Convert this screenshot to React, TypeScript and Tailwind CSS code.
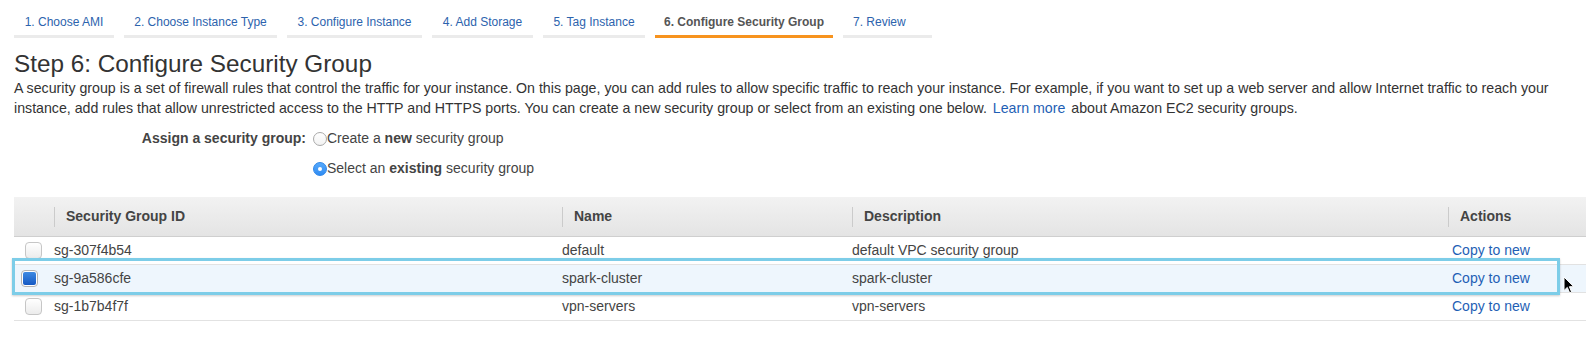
import React from "react";

const tabs = [
  { label: "1. Choose AMI", w: "w-[100px]" },
  { label: "2. Choose Instance Type", w: "w-[153px]" },
  { label: "3. Configure Instance", w: "w-[135px]" },
  { label: "4. Add Storage", w: "w-[101px]" },
  { label: "5. Tag Instance", w: "w-[102px]" },
  { label: "6. Configure Security Group", w: "w-[178px]", active: true },
  { label: "7. Review", w: "w-[89px]", left: true },
];

const rows = [
  { id: "sg-307f4b54", name: "default", desc: "default VPC security group" },
  { id: "sg-9a586cfe", name: "spark-cluster", desc: "spark-cluster", selected: true },
  { id: "sg-1b7b4f7f", name: "vpn-servers", desc: "vpn-servers" },
];

function Radio({ checked }: { checked?: boolean }) {
  if (checked) {
    return (
      <span className="relative top-[1px] flex h-[14px] w-[14px] shrink-0 items-center justify-center rounded-full border border-[#2f86e8] bg-gradient-to-b from-[#56a9fb] to-[#2f8cf3]">
        <span className="h-[4px] w-[4px] rounded-full bg-white" />
      </span>
    );
  }
  return (
    <span className="relative top-[1px] block h-[14px] w-[14px] shrink-0 rounded-full border border-[#a9a9a9] bg-gradient-to-b from-white to-[#f2f2f2]" />
  );
}

function Checkbox({ checked }: { checked?: boolean }) {
  if (checked) {
    return (
      <span className="ml-[7px] flex h-[17px] w-[17px] items-center justify-center rounded-[4px] border border-[#b4b4b4] bg-white">
        <span className="h-[13px] w-[13px] rounded-[2px] bg-gradient-to-b from-[#3f8ae2] to-[#1459c4]" />
      </span>
    );
  }
  return (
    <span className="ml-[11px] block h-[17px] w-[17px] rounded-[4px] border border-[#c6c6c6] bg-gradient-to-b from-white to-[#ececec]" />
  );
}

function HeadCell({ children }: { children?: React.ReactNode }) {
  return (
    <div className="flex h-[39px] items-center">
      <div className="h-[20px] border-l border-[#cbcbcb]" />
      <span className="pl-[11px] font-bold text-[#444]">{children}</span>
    </div>
  );
}

const COLS = "grid-cols-[40px_508px_290px_596px_1fr]";

export default function App() {
  return (
    <div className="relative h-[337px] w-[1586px] overflow-hidden bg-white font-['Liberation_Sans',Arial,sans-serif] text-[#333]">
      {/* Wizard tabs */}
      <div className="flex gap-[10px] pl-[14px]">
        {tabs.map((t) => (
          <div
            key={t.label}
            className={
              t.active
                ? `${t.w} whitespace-nowrap border-b-[3px] border-[#f7931e] pb-[5px] pt-[14px] text-center text-[12px] font-bold leading-[16px] text-[#555]`
                : t.left
                ? `${t.w} whitespace-nowrap border-b-[3px] border-[#ebebeb] pb-[5px] pl-[10px] pt-[14px] text-[12px] leading-[16px] text-[#2c63ad]`
                : `${t.w} whitespace-nowrap border-b-[3px] border-[#ebebeb] pb-[5px] pt-[14px] text-center text-[12px] leading-[16px] text-[#2c63ad]`
            }
          >
            {t.label}
          </div>
        ))}
      </div>

      <div className="pl-[14px]">
        <h1 className="mt-[12px] text-[24.3px] leading-[28px] text-[#333]">
          Step 6: Configure Security Group
        </h1>
        <p className="whitespace-nowrap text-[14.2px] leading-[20px] text-[#333]">
          A security group is a set of firewall rules that control the traffic for your instance. On this page, you can add rules to allow specific traffic to reach your instance. For example, if you want to set up a web server and allow Internet traffic to reach your
          <br />
          instance, add rules that allow unrestricted access to the HTTP and HTTPS ports. You can create a new security group or select from an existing one below.{" "}
          <span className="px-[2px] text-[#1f5fb5]">Learn more</span> about Amazon EC2 security groups.
        </p>

        <div className="mt-[10px] grid grid-cols-[292px_1fr] gap-x-[7px] gap-y-[10px] text-[14px] leading-[20px]">
          <div className="text-right font-bold text-[#444]">Assign a security group:</div>
          <div className="flex items-center text-[#444]">
            <Radio />
            <span>
              Create a <b>new</b> security group
            </span>
          </div>
          <div />
          <div className="flex items-center text-[#444]">
            <Radio checked />
            <span>
              Select an <b>existing</b> security group
            </span>
          </div>
        </div>

        {/* Table */}
        <div className="relative mt-[19px] text-[14px] text-[#444]">
          <div className={`grid ${COLS} border-b border-[#cfcfcf] bg-gradient-to-b from-[#f2f2f2] to-[#e4e4e4]`}>
            <div className="h-[39px]" />
            <HeadCell>Security Group ID</HeadCell>
            <HeadCell>Name</HeadCell>
            <HeadCell>Description</HeadCell>
            <HeadCell>Actions</HeadCell>
          </div>
          {rows.map((r) => (
            <div
              key={r.id}
              className={`grid h-[28px] ${COLS} items-center border-b border-[#e2e2e2] ${
                r.selected ? "bg-[#eef6fd]" : "bg-white"
              }`}
            >
              <div className="flex items-center">
                <Checkbox checked={r.selected} />
              </div>
              <div className="whitespace-nowrap">{r.id}</div>
              <div className="whitespace-nowrap">{r.name}</div>
              <div className="whitespace-nowrap">{r.desc}</div>
              <div className="whitespace-nowrap pl-[4px] text-[#1f5fb5]">Copy to new</div>
            </div>
          ))}

          {/* highlight annotation */}
          <div className="pointer-events-none absolute left-[-2px] top-[61px] h-[37px] w-[1548px] border-[3px] border-[#7dcde8] shadow-[0_1px_2px_rgba(0,0,0,0.2)]" />

          {/* mouse cursor */}
          <svg
            className="absolute left-[1549px] top-[79px]"
            width="12"
            height="18"
            viewBox="0 0 12 18"
          >
            <path
              d="M1 1 L1 14.5 L4.3 11.4 L6.6 16.8 L8.6 15.9 L6.4 10.7 L10.8 10.7 Z"
              fill="#000"
              stroke="#fff"
              strokeWidth="1"
              strokeLinejoin="round"
            />
          </svg>
        </div>
      </div>
    </div>
  );
}
